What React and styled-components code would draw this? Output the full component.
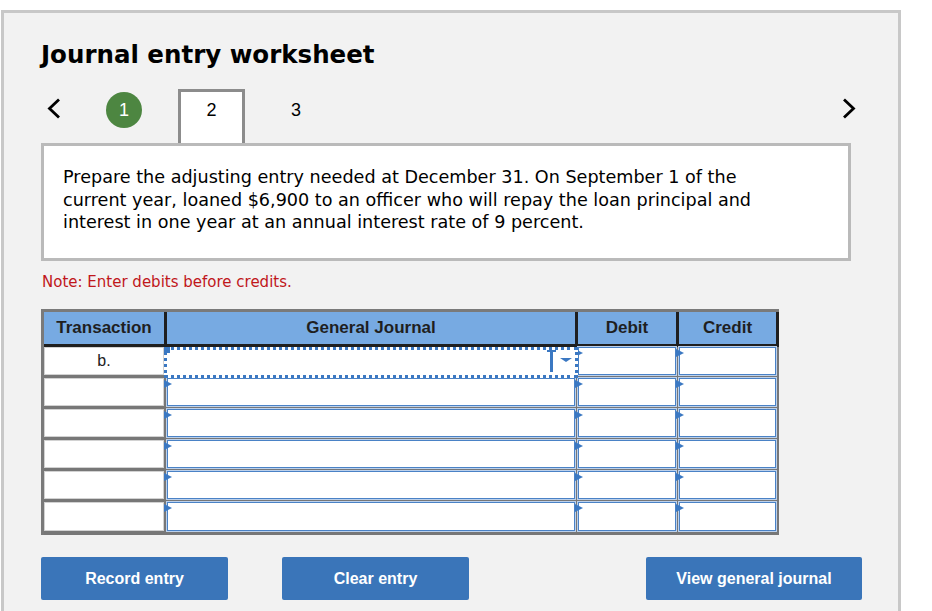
import React from "react";
import styled, { createGlobalStyle, css } from "styled-components";

const Global = createGlobalStyle`
  html, body { margin: 0; padding: 0; background: #ffffff; }
  body { font-family: "DejaVu Sans", Verdana, sans-serif; }
  * { box-sizing: border-box; }
`;

const Panel = styled.div`
  margin: 10px 0 0 1px;
  width: 900px;
  min-height: 601px;
  background: #f2f2f2;
  border: 3px solid #c8c8c8;
  border-bottom: none;
  padding: 27px 36px 0 37px;
`;

const Title = styled.h1`
  margin: 0;
  font-family: "DejaVu Sans", Verdana, sans-serif;
  font-weight: bold;
  font-size: 24.5px;
  line-height: 29px;
  color: #000;
`;

const NavRow = styled.div`
  margin-top: 20px;
  height: 54px;
  display: flex;
  align-items: flex-start;
`;

const Chevron = styled.svg`
  margin-top: 9px;
  margin-left: ${(p) => (p.$right ? "auto" : "6px")};
  margin-right: ${(p) => (p.$right ? "6px" : "0")};
  flex: none;
`;

const StepDone = styled.div`
  margin-top: 3px;
  margin-left: 45px;
  width: 36px;
  height: 36px;
  border-radius: 50%;
  background: #4d8641;
  color: #fff;
  font-family: "Liberation Sans", Arial, sans-serif;
  font-size: 18px;
  line-height: 36px;
  text-align: center;
`;

const StepTab = styled.div`
  margin-left: 36px;
  width: 67px;
  height: 54px;
  background: #fff;
  border: 3px solid #8c8c8c;
  border-bottom: none;
  font-family: "Liberation Sans", Arial, sans-serif;
  font-size: 18px;
  line-height: 36px;
  text-align: center;
  color: #000;
`;

const Step = styled.div`
  margin-top: 3px;
  margin-left: 46px;
  font-family: "Liberation Sans", Arial, sans-serif;
  font-size: 18px;
  line-height: 36px;
  color: #000;
`;

const Prompt = styled.div`
  width: 810px;
  height: 118px;
  background: #fff;
  border: 3px solid #bababa;
  padding: 20px 16px 0 19px;
  font-family: "DejaVu Sans", Verdana, sans-serif;
  font-size: 17.6px;
  line-height: 22.5px;
  color: #000;
  white-space: nowrap;
`;

const Note = styled.p`
  margin: 12px 0 0 1px;
  font-family: "DejaVu Sans", Verdana, sans-serif;
  font-size: 15px;
  line-height: 18px;
  color: #c0171b;
`;

const Table = styled.div`
  margin-top: 18px;
  width: 738px;
  display: grid;
  grid-template-columns: 123px 411px 101px 100px;
  border-top: 3px solid #7a7a7a;
  border-left: 3px solid #7a7a7a;
  background: #777;
`;

const HeadCell = styled.div`
  height: 35px;
  background: #77aae2;
  border-right: 3px solid #1f1f1f;
  border-bottom: 3px solid #1f1f1f;
  font-family: "Liberation Sans", Arial, sans-serif;
  font-weight: bold;
  font-size: 17px;
  line-height: 32px;
  text-align: center;
  color: #1f1f1f;
`;

const BodyCell = styled.div`
  position: relative;
  height: ${(p) => (p.$last ? 33 : 31)}px;
  border-right: 3px solid #777;
  border-bottom: ${(p) => (p.$last ? 4 : 3)}px solid #777;
  background: #777;
  z-index: ${(p) => (p.$focus ? 2 : 1)};
`;

const TxBox = styled.div`
  height: 100%;
  background: #fff;
  box-shadow: inset 0 0 0 1px #d2d2d2;
  font-family: "Liberation Sans", Arial, sans-serif;
  font-size: 16px;
  line-height: 27px;
  text-align: center;
  color: #222;
`;

const InputBox = styled.div`
  position: relative;
  height: 100%;
  background: #fff;
  border: 1px solid #4a82c6;
  box-shadow: 0 0 0 1px #bcd1ec;
  &::before {
    content: "";
    position: absolute;
    left: -4px;
    top: 1px;
    border-top: 4.5px solid transparent;
    border-bottom: 4.5px solid transparent;
    border-left: 8px solid #3b78c2;
  }
  ${(p) =>
    p.$focus &&
    css`
      margin-left: -3px;
      width: calc(100% + 6px);
      height: calc(100% + 3px);
      border: 3px dotted #3b78c2;
      box-shadow: none;
      &::before {
        left: -3px;
        top: -3px;
        border: none;
        width: 6px;
        height: 6px;
        background: #3b78c2;
      }
    `}
`;

const DropMark = styled.svg`
  position: absolute;
  right: 2px;
  top: 0;
`;

const ButtonRow = styled.div`
  margin-top: 22px;
  display: flex;
  align-items: center;
`;

const Button = styled.button`
  width: ${(p) => p.$w}px;
  margin-left: ${(p) => p.$ml || "0"};
  height: 43px;
  border: none;
  border-radius: 2px;
  background: #3a75b9;
  color: #fff;
  font-family: "Liberation Sans", Arial, sans-serif;
  font-weight: bold;
  font-size: 16px;
  padding: 0;
  cursor: pointer;
`;

const rows = ["b.", "", "", "", "", ""];

export default function App() {
  return (
    <>
      <Global />
      <Panel>
        <Title>Journal entry worksheet</Title>
        <NavRow>
          <Chevron width="14" height="21" viewBox="0 0 14 21">
            <polyline points="12,1.5 2.5,10.5 12,19.5" fill="none" stroke="#000" strokeWidth="2.8" />
          </Chevron>
          <StepDone>1</StepDone>
          <StepTab>2</StepTab>
          <Step>3</Step>
          <Chevron $right width="14" height="21" viewBox="0 0 14 21">
            <polyline points="2,1.5 11.5,10.5 2,19.5" fill="none" stroke="#000" strokeWidth="2.8" />
          </Chevron>
        </NavRow>
        <Prompt>
          Prepare the adjusting entry needed at December 31. On September 1 of the
          <br />
          current year, loaned $6,900 to an officer who will repay the loan principal and
          <br />
          interest in one year at an annual interest rate of 9 percent.
        </Prompt>
        <Note>Note: Enter debits before credits.</Note>
        <Table>
          <HeadCell>Transaction</HeadCell>
          <HeadCell>General Journal</HeadCell>
          <HeadCell>Debit</HeadCell>
          <HeadCell>Credit</HeadCell>
          {rows.map((t, i) => {
            const last = i === rows.length - 1;
            return (
              <React.Fragment key={i}>
                <BodyCell $last={last}>
                  <TxBox>{t}</TxBox>
                </BodyCell>
                <BodyCell $last={last} $focus={i === 0}>
                  <InputBox $focus={i === 0}>
                    {i === 0 && (
                      <DropMark width="26" height="22" viewBox="0 0 26 22">
                        <rect x="3" y="0" width="3" height="22" fill="#3b78c2" />
                        <rect x="0" y="0" width="9" height="2" fill="#3b78c2" />
                        <polygon points="13,8 25,8 19,12" fill="#3b78c2" />
                      </DropMark>
                    )}
                  </InputBox>
                </BodyCell>
                <BodyCell $last={last}>
                  <InputBox />
                </BodyCell>
                <BodyCell $last={last}>
                  <InputBox />
                </BodyCell>
              </React.Fragment>
            );
          })}
        </Table>
        <ButtonRow>
          <Button $w={187}>Record entry</Button>
          <Button $w={187} $ml="54px">Clear entry</Button>
          <Button $w={216} $ml="auto">View general journal</Button>
        </ButtonRow>
      </Panel>
    </>
  );
}
